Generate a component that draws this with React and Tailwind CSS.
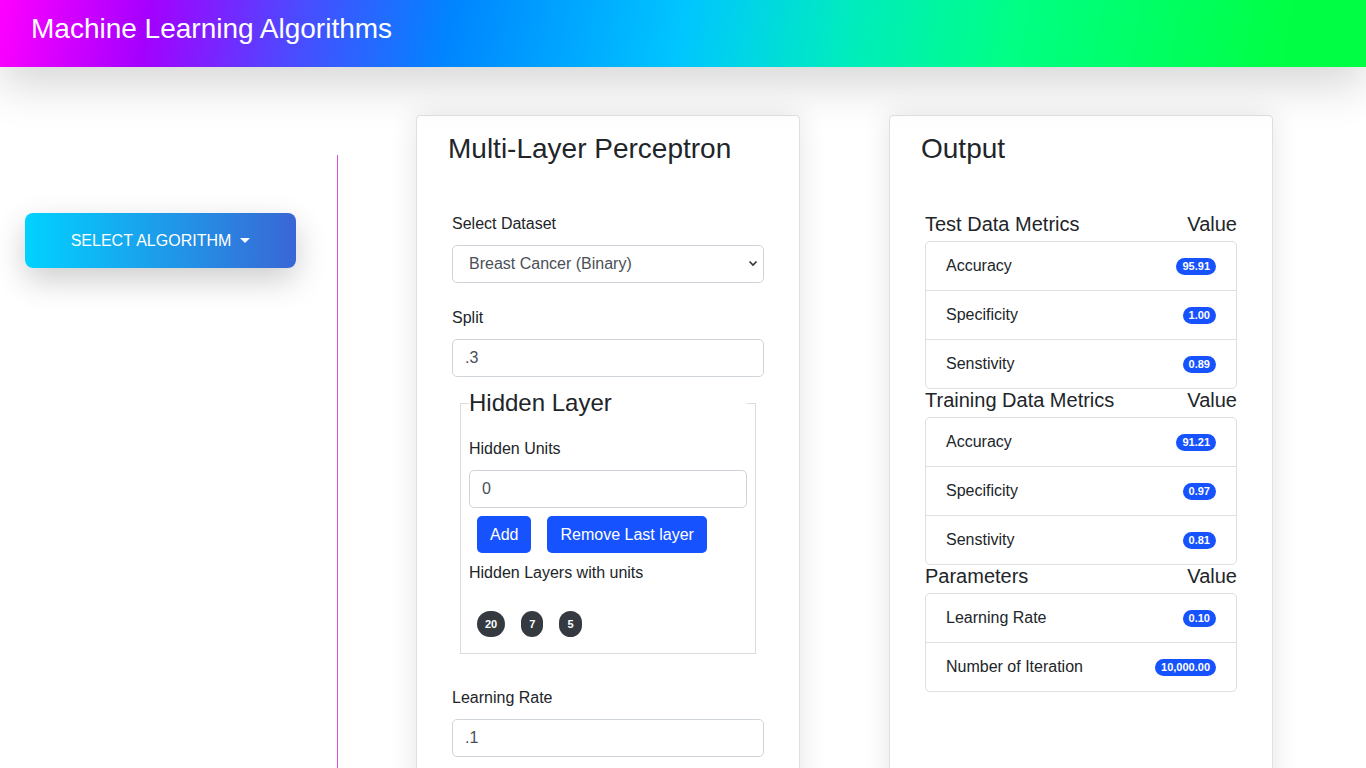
import React from 'react';

const font = { fontFamily: '"Liberation Sans", Arial, sans-serif' };

function Label({ children, className = '' }) {
  return <label className={`block text-[16px] leading-6 text-[#212529] mb-[9px] ${className}`}>{children}</label>;
}

function TextInput({ value }) {
  return (
    <input
      type="text"
      defaultValue={value}
      className="block w-full h-[38px] px-3 text-[16px] text-[#495057] bg-white border border-[#ced4da] rounded-[5px] outline-none"
    />
  );
}

function MetricList({ title, rows }) {
  return (
    <div>
      <div className="flex justify-between items-center h-[23px] text-[20px] leading-[23px] text-[#212529]">
        <span>{title}</span>
        <span>Value</span>
      </div>
      <ul className="mt-[5px] border border-[#dfdfdf] rounded-[5px]">
        {rows.map(([name, val], i) => (
          <li
            key={name}
            className={`flex justify-between items-center px-5 py-3 text-[16px] leading-6 text-[#212529] ${i > 0 ? 'border-t border-[#dfdfdf]' : ''}`}
          >
            <span>{name}</span>
            <span className="bg-[#1652fd] text-white text-[11px] font-bold leading-none px-[6px] py-[3px] rounded-full">{val}</span>
          </li>
        ))}
      </ul>
    </div>
  );
}

export default function App() {
  return (
    <div style={font} className="h-screen overflow-y-scroll bg-white">
      <header className="relative h-[67px] px-[31px] pt-[12px] bg-[linear-gradient(100deg,#ff00ff_0%,#a400ff_11%,#4a4cff_22%,#0085ff_33%,#00c6ff_50%,#00ecbe_62%,#00ff84_74%,#00ff44_94%)] shadow-[0_18px_45px_rgba(0,0,0,0.16)]">
        <h1 className="text-[28px] leading-[34px] text-white">Machine Learning Algorithms</h1>
      </header>

      <div className="flex">
        <aside className="w-[338px] shrink-0 mt-[88px] border-r border-[#e04ce0] pt-[58px] pl-[25px]">
          <button
            type="button"
            className="flex items-center justify-center w-[271px] h-[55px] rounded-[8px] bg-[linear-gradient(to_right,#00d2ff,#3a66d5)] text-white text-[16px] shadow-[0_12px_32px_rgba(0,0,0,0.2)]"
          >
            SELECT ALGORITHM
            <span className="ml-[9px] w-0 h-0 border-t-[5px] border-t-white border-x-[5px] border-x-transparent"></span>
          </button>
        </aside>

        <main className="flex items-stretch gap-[89px] pl-[78px] pt-[48px] pb-[48px]">
          <section className="w-[384px] bg-white border border-[#e0e0e0] rounded-[4px] shadow-[0_0_28px_rgba(0,0,0,0.11)]">
            <h2 className="pl-[31px] pt-[16px] text-[28px] leading-[34px] text-[#212529]">Multi-Layer Perceptron</h2>
            <form className="px-[35px] pt-[46px] pb-[50px]" onSubmit={e => e.preventDefault()}>
              <Label>Select Dataset</Label>
              <div className="relative">
                <select
                  defaultValue="bc"
                  className="block w-full h-[38px] pl-4 pr-8 text-[16px] text-[#495057] bg-white border border-[#ced4da] rounded-[5px] appearance-none outline-none"
                >
                  <option value="bc">Breast Cancer (Binary)</option>
                  <option value="iris">Iris (Multiclass)</option>
                </select>
                <svg className="absolute right-[6px] top-[15px] pointer-events-none" width="10" height="7" viewBox="0 0 10 7">
                  <path d="M1.5 1.5 L5 5 L8.5 1.5" fill="none" stroke="#333" strokeWidth="1.6" />
                </svg>
              </div>

              <Label className="mt-[23px]">Split</Label>
              <TextInput value=".3" />

              <fieldset className="mt-[8px] mx-2 px-2 pb-2 border border-[#dcdcdc]">
                <legend className="w-full text-[24px] leading-[36px] text-[#212529]">Hidden Layer</legend>
                <Label className="mt-[16px]">Hidden Units</Label>
                <TextInput value="0" />
                <div className="flex mt-2">
                  <button type="button" className="mx-2 h-[37px] px-[13px] text-[16px] text-white bg-[#1652fd] rounded-[5px]">Add</button>
                  <button type="button" className="mx-2 h-[37px] px-[13px] text-[16px] text-white bg-[#1652fd] rounded-[5px]">Remove Last layer</button>
                </div>
                <p className="mt-2 text-[16px] leading-6 text-[#212529]">Hidden Layers with units</p>
                <div className="flex mt-[26px]">
                  {['20', '7', '5'].map(u => (
                    <span key={u} className="m-2 mt-0 px-2 py-[7px] text-[11px] leading-[12px] font-bold text-white bg-[#343a40] rounded-full">{u}</span>
                  ))}
                </div>
              </fieldset>

              <Label className="mt-[32px]">Learning Rate</Label>
              <TextInput value=".1" />

              <Label className="mt-[23px]">Number of Iteration</Label>
              <TextInput value="10000" />

              <button type="button" className="mt-[23px] h-[38px] px-3 text-[16px] text-white bg-[#1652fd] rounded-[5px]">Train Model</button>
            </form>
          </section>

          <section className="w-[384px] bg-white border border-[#e0e0e0] rounded-[4px] shadow-[0_0_28px_rgba(0,0,0,0.11)]">
            <h2 className="pl-[31px] pt-[16px] text-[28px] leading-[34px] text-[#212529]">Output</h2>
            <div className="px-[35px] pt-[47px]">
              <MetricList
                title="Test Data Metrics"
                rows={[['Accuracy', '95.91'], ['Specificity', '1.00'], ['Senstivity', '0.89']]}
              />
              <MetricList
                title="Training Data Metrics"
                rows={[['Accuracy', '91.21'], ['Specificity', '0.97'], ['Senstivity', '0.81']]}
              />
              <MetricList
                title="Parameters"
                rows={[['Learning Rate', '0.10'], ['Number of Iteration', '10,000.00']]}
              />
            </div>
          </section>
        </main>
      </div>
    </div>
  );
}
